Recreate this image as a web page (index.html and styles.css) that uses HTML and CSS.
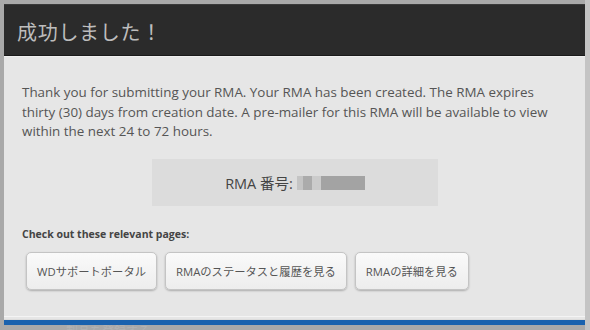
FILE: index.html
```html
<!DOCTYPE html>
<html lang="ja">
<head>
    <meta charset="UTF-8">
    <title>RMA</title>
    <link rel="stylesheet" href="styles.css">
</head>
<body>
    <div class="page">
        <div class="modal">
            <header class="modal-header">
                <h1>成功しました！</h1>
            </header>
            <div class="modal-body">
                <p class="intro">Thank you for submitting your RMA. Your RMA has been created. The RMA expires thirty (30) days from creation date. A pre-mailer for this RMA will be available to view within the next 24 to 72 hours.</p>

                <div class="rma-box">
                    <span class="rma-label">RMA 番号:</span>
                    <span class="blur">
                        <span class="b1"></span><span class="b2"></span><span class="b3"></span><span class="b4"></span>
                    </span>
                </div>

                <p class="links-title">Check out these relevant pages:</p>
                <div class="links">
                    <a class="btn" href="#">WDサポートポータル</a>
                    <a class="btn" href="#">RMAのステータスと履歴を見る</a>
                    <a class="btn" href="#">RMAの詳細を見る</a>
                </div>
            </div>
            <div class="modal-footer"></div>
        </div>
        <div class="behind">製品を登録する</div>
    </div>
</body>
</html>
```

FILE: styles.css
```css
* {
    margin: 0;
    padding: 0;
    box-sizing: border-box;
}

body {
    background-color: #a9a9a9;
    font-family: 'Open Sans', 'Noto Sans CJK JP', sans-serif;
    width: 590px;
    height: 330px;
    overflow: hidden;
}

.page {
    padding: 4px 5px 0 4px;
    height: 330px;
    background: linear-gradient(to right, #a9a9a9 585px, #c4c4c4 585px);
}

.modal {
    width: 581px;
    background-color: #e6e6e6;
}

/* Header */
.modal-header {
    background-color: #2b2b2b;
    height: 52px;
    border-top: 1px solid #3a3a3a;
    border-bottom: 1px solid #1a1a1a;
    display: flex;
    align-items: center;
    padding-left: 13px;
    padding-top: 2px;
}

.modal-header h1 {
    font-size: 20px;
    font-weight: 400;
    color: #bdbdbd;
    letter-spacing: 0.7px;
}

/* Corps */
.modal-body {
    padding: 26px 30px 26px 18px;
    border-top: 1px solid #f0f0f0;
    border-bottom: 1px solid #f4f4f4;
}

.intro {
    font-size: 13.4px;
    line-height: 19.5px;
    color: #555;
}

.rma-box {
    margin: 17px 0 0 130px;
    width: 286px;
    height: 47px;
    background-color: #dcdcdc;
    display: flex;
    align-items: center;
    justify-content: center;
    gap: 4px;
}

.rma-label {
    font-size: 14.5px;
    color: #444;
}

.blur {
    display: flex;
    height: 14px;
    margin-top: 2px;
}

.blur span {
    display: block;
    height: 100%;
}

.blur .b1 { width: 6px; background: #c4c4c4; }
.blur .b2 { width: 9px; background: #ababab; }
.blur .b3 { width: 9px; background: #cbcbcb; }
.blur .b4 { width: 44px; background: #a3a3a3; }

.links-title {
    margin-top: 21px;
    font-size: 10.5px;
    font-weight: 700;
    color: #444;
}

.links {
    display: flex;
    gap: 8px;
    margin-top: 11px;
    padding-left: 4px;
}

.btn {
    display: flex;
    align-items: center;
    height: 38px;
    padding: 0 10px;
    font-size: 11.3px;
    color: #555;
    text-decoration: none;
    background: linear-gradient(#fafafa, #ededed);
    border: 1px solid #c4c4c4;
    border-radius: 5px;
    box-shadow: 0 1px 2px rgba(0, 0, 0, 0.25);
}

/* Pied */
.modal-footer {
    border-top: 2px solid #e6e6e6;
    border-bottom: 5px solid #1a62ae;
    background: #dcdcdc;
    height: 8px;
}

.behind {
    margin: 0 0 0 62px;
    font-size: 12px;
    color: #b3b3b3;
    line-height: 14px;
}
```
